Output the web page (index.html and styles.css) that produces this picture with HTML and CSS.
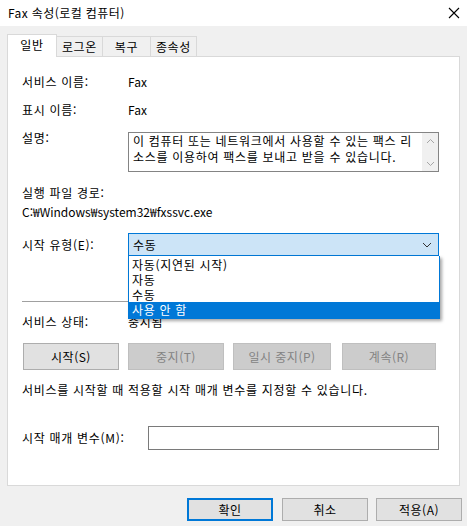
FILE: index.html
```html
<!DOCTYPE html>
<html lang="ko">
<head>
<meta charset="utf-8">
<title>Fax 속성(로컬 컴퓨터)</title>
<link rel="stylesheet" href="styles.css">
</head>
<body>
<div class="window">
  <div class="titlebar">
    <span class="title">Fax 속성(로컬 컴퓨터)</span>
    <svg class="close" width="12" height="12" viewBox="0 0 12 12"><path d="M1 1L11 11M11 1L1 11" stroke="#000" stroke-width="1.1" fill="none"/></svg>
  </div>
  <div class="dialog">
    <div class="tabs">
      <div class="tab active">일반</div>
      <div class="tab t2">로그온</div>
      <div class="tab t3">복구</div>
      <div class="tab t4">종속성</div>
    </div>
    <div class="panel">
      <div class="row r1"><span class="label">서비스 이름:</span><span class="latin">Fax</span></div>
      <div class="row r2"><span class="label">표시 이름:</span><span class="latin">Fax</span></div>
      <div class="row r3">
        <span class="label desc-label">설명:</span>
        <div class="textbox">
          <div class="tb-text">이 컴퓨터 또는 네트워크에서 사용할 수 있는 팩스 리소스를 이용하여 팩스를 보내고 받을 수 있습니다.</div>
          <div class="tb-scroll">
            <svg width="9" height="6" viewBox="0 0 9 6"><path d="M1 5L4.5 1.5L8 5" stroke="#a6a6a6" fill="none"/></svg>
            <svg width="9" height="6" viewBox="0 0 9 6"><path d="M1 1L4.5 4.5L8 1" stroke="#a6a6a6" fill="none"/></svg>
          </div>
        </div>
      </div>
      <div class="line r4">실행 파일 경로:</div>
      <div class="line r5 latin">C:₩Windows₩system32₩fxssvc.exe</div>
      <div class="row r6">
        <span class="label">시작 유형(E):</span>
        <div class="combo-wrap">
          <div class="combo">
            <span>수동</span>
            <svg width="10" height="6" viewBox="0 0 10 6"><path d="M1 1L5 5L9 1" stroke="#333" stroke-width="1" fill="none"/></svg>
          </div>
          <ul class="dropdown">
            <li>자동(지연된 시작)</li>
            <li>자동</li>
            <li>수동</li>
            <li class="sel">사용 안 함</li>
          </ul>
        </div>
      </div>
      <div class="sep"></div>
      <div class="row r7"><span class="label">서비스 상태:</span><span>중지됨</span></div>
      <div class="svc-buttons">
        <button class="btn">시작(S)</button>
        <button class="btn disabled">중지(T)</button>
        <button class="btn disabled">일시 중지(P)</button>
        <button class="btn disabled">계속(R)</button>
      </div>
      <div class="line r8">서비스를 시작할 때 적용할 시작 매개 변수를 지정할 수 있습니다.</div>
      <div class="row r9">
        <span class="label wide">시작 매개 변수(M):</span>
        <div class="input"></div>
      </div>
    </div>
    <div class="footer">
      <button class="fbtn default">확인</button>
      <button class="fbtn">취소</button>
      <button class="fbtn">적용(A)</button>
    </div>
  </div>
</div>
</body>
</html>
```

FILE: styles.css
```css
* { box-sizing: border-box; }
html, body {
  margin: 0;
  padding: 0;
}
body {
  width: 467px;
  height: 526px;
  background: #f0f0f0;
  font-family: "Noto Sans CJK KR", "Noto Sans", sans-serif;
  font-size: 12px;
  line-height: 16px;
  letter-spacing: 0.7px;
  color: #000;
  overflow: hidden;
}
.latin { letter-spacing: 0; }
.window {
  width: 467px;
  height: 526px;
  display: flex;
  flex-direction: column;
}
.titlebar {
  height: 26px;
  background: #fff;
  display: flex;
  align-items: center;
  justify-content: space-between;
  padding: 0 7px 0 8px;
}
.title {
  font-size: 12px;
  color: #000;
  letter-spacing: 0.4px;
}
.close {
  display: block;
}
.dialog {
  padding: 8px 7px 0 7px;
  display: flex;
  flex-direction: column;
}
.tabs {
  display: flex;
  align-items: flex-end;
  height: 22px;
  position: relative;
  z-index: 2;
}
.tab {
  height: 20px;
  border: 1px solid #d9d9d9;
  border-bottom: none;
  background: #f0f0f0;
  display: flex;
  align-items: center;
  justify-content: center;
  white-space: nowrap;
  font-size: 12px;
  margin-left: -1px;
  padding: 0;
}
.t2 { width: 47px; }
.t3 { width: 49px; }
.t4 { width: 47px; }
.tab.active {
  height: 23px;
  width: 50px;
  margin-left: 0;
  background: #fff;
  margin-bottom: -1px;
  padding-bottom: 2px;
  position: relative;
  z-index: 3;
}
.panel {
  height: 430px;
  width: 453px;
  background: #fff;
  border: 1px solid #d9d9d9;
  padding: 17px 20px 0 14px;
  display: flex;
  flex-direction: column;
  position: relative;
}
.row {
  display: flex;
  align-items: center;
}
.label {
  width: 106px;
  flex: none;
  white-space: nowrap;
}
.label.wide {
  width: 126px;
}
.r1 { height: 16px; }
.r2 { height: 16px; margin-top: 12px; }
.r3 { margin-top: 14px; align-items: flex-start; }
.desc-label { margin-top: -2px; }
.textbox {
  width: 311px;
  height: 40px;
  border: 1px solid #848484;
  display: flex;
  background: #fff;
}
.tb-text {
  flex: 1;
  padding: 0 4px 0 4px;
  line-height: 16px;
  word-break: break-all;
}
.tb-scroll {
  width: 16px;
  flex: none;
  background: #f0f0f0;
  display: flex;
  flex-direction: column;
  justify-content: space-between;
  align-items: center;
  padding: 5px 0 4px;
}
.tb-scroll svg { display: block; }
.line { height: 16px; white-space: nowrap; }
.r4 { margin-top: 13px; }
.r5 { margin-top: 3px; }
.r6 { margin-top: 13px; height: 23px; }
.combo-wrap {
  position: relative;
  width: 312px;
  height: 23px;
}
.combo {
  height: 23px;
  border: 1px solid #0078d7;
  background: #cce4f7;
  display: flex;
  align-items: center;
  justify-content: space-between;
  padding: 0 6px 0 4px;
}
.combo svg { display: block; }
.dropdown {
  position: absolute;
  top: 23px;
  left: 0;
  width: 312px;
  margin: 0;
  padding: 1px 0 0;
  list-style: none;
  background: #fff;
  border: 1px solid #0078d7;
  border-top: none;
  box-shadow: 2px 2px 3px rgba(0, 0, 0, 0.35);
  z-index: 5;
}
.dropdown li {
  height: 15px;
  line-height: 15px;
  padding-left: 3px;
}
.dropdown li.sel {
  background: #0078d7;
  color: #fff;
  height: 16px;
}
.sep {
  margin-top: 45px;
  height: 1px;
  background: #a0a0a0;
  width: 417px;
}
.r7 { margin-top: 12px; height: 16px; }
.svc-buttons {
  margin-top: 13px;
  display: grid;
  grid-template-columns: 96px 96px 98px 96px;
  column-gap: 9px;
  margin-left: 1px;
}
.btn {
  height: 27px;
  background: #e1e1e1;
  border: 1px solid #adadad;
  font-family: inherit;
  font-size: 12px;
  letter-spacing: 0.5px;
  color: #000;
  padding: 0;
}
.btn.disabled {
  background: #cccccc;
  border-color: #bfbfbf;
  color: #838383;
}
.svc-buttons .btn:nth-child(4) { margin-left: 2px; }
.r8 { margin-top: 12px; }
.r9 { margin-top: 28px; height: 24px; }
.input {
  width: 291px;
  height: 24px;
  border: 1px solid #7a7a7a;
  background: #fff;
}
.footer {
  display: flex;
  justify-content: flex-end;
  margin-top: 12px;
  margin-right: -2px;
  gap: 9px;
}
.fbtn {
  width: 86px;
  height: 23px;
  background: #e1e1e1;
  border: 1px solid #adadad;
  font-family: inherit;
  font-size: 12px;
  letter-spacing: 0.5px;
  color: #000;
  padding: 0;
}
.fbtn.default {
  border: 2px solid #0078d7;
}
.fbtn:nth-child(3) { margin-left: -1px; }
```
